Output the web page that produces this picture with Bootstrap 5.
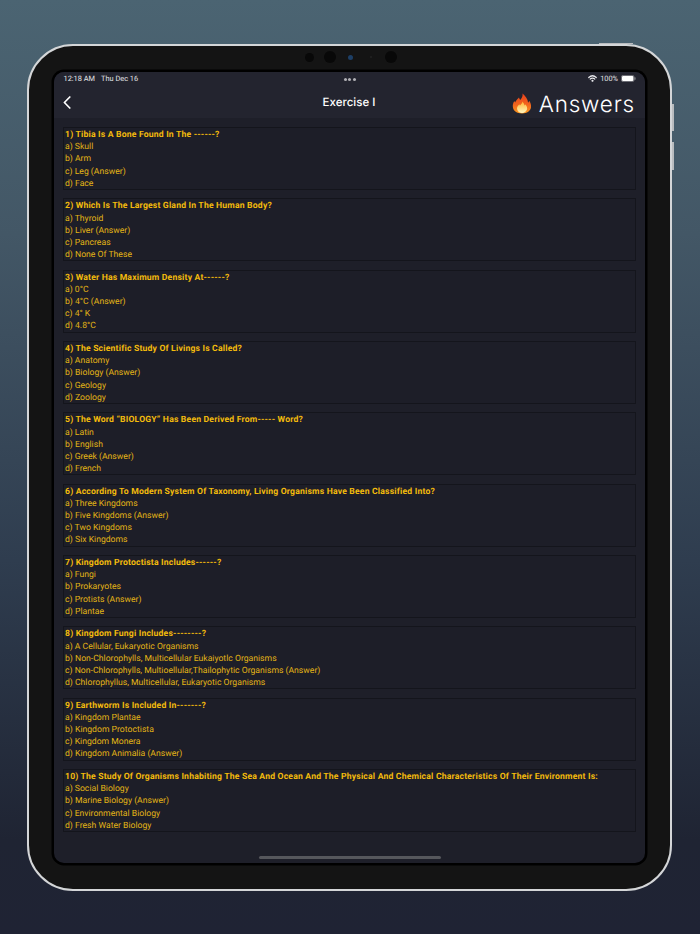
<!DOCTYPE html>
<html lang="en">
<head>
  <meta charset="UTF-8">
  <title>Exercise I</title>
  <meta name="viewport" content="width=device-width, initial-scale=1">
  <link href="https://cdn.jsdelivr.net/npm/bootstrap@5.3.2/dist/css/bootstrap.min.css" rel="stylesheet">
  <style>
    html, body { height: 934px; overflow: hidden; }
    body {
      background: linear-gradient(180deg, #4b6472 0%, #435766 25%, #2f3d4f 60%, #1f2433 90%, #1f2334 100%);
      padding: 44px 28px 0 27px;
      font-family: Roboto, "Liberation Sans", sans-serif;
      text-rendering: geometricPrecision;
    }
    .tablet {
      position: relative;
      width: 645px; height: 847px;
      background: #141414;
      border: 2px solid #d4d6d8;
      border-radius: 46px;
      padding: 26px 25px;
    }
    .tablet-btn { position: absolute; background: #b9bcbf; }
    .btn-top { top: -3px; right: 37px; width: 34px; height: 1px; }
    .btn-vol1 { top: 58px; right: -4px; width: 2px; height: 27px; }
    .btn-vol2 { top: 96px; right: -4px; width: 2px; height: 28px; }
    .sensor-row { position: absolute; top: 5px; left: 270px; }
    .sensor-slot { width: 20.5px; }
    .lens { border-radius: 50%; background: #080808; }
    .lens-a { width: 9px; height: 9px; }
    .lens-b { width: 12px; height: 12px; }
    .lens-c { width: 5px; height: 5px; background: #1d3f66; }
    .lens-d { width: 2px; height: 2px; background: #222; }
    .screen {
      height: 791px;
      background: #1e1f29;
      border-radius: 10px;
      box-shadow: 0 0 0 2.5px #000;
      overflow: hidden;
      color: #fff;
    }
    .top-area { background: #23242f; height: 46px; }
    .status-line {
      height: 14px; padding: 0 9px 0 9.5px;
      font-size: 7.4px; color: #e4e4e8;
    }
    .status-side { flex: 1 1 0; gap: 6px; }
    .status-right { gap: 3px; }
    .status-dots { gap: 1.5px; }
    .status-dots i { width: 3px; height: 3px; border-radius: 50%; background: #b0b0b5; display: block; }
    .nav-line { height: 32px; padding: 0 10px 0 9px; }
    .page-title { font-family: Inter, sans-serif; font-size: 11.5px; font-weight: 500; padding-top: 1px; }
    .nav-side { width: 140px; }
    .flame-icon { margin-right: 7px; margin-top: 3px; }
    .answers-word { font-family: Inter, sans-serif; font-size: 22.5px; font-weight: 300; letter-spacing: .8px; line-height: 1; padding-top: 6px; }
    .qa-list { padding: 9px 9px 0 9px; gap: 8.33px; }
    .qa-box {
      height: 63px;
      border: 1px solid #14151c;
      padding: 1px 1px 0;
      color: #e2b415;
      font-size: 8.65px;
      line-height: 12.2px;
      background: #1d1e28;
    }
    .qa-box b { display: block; font-weight: 700; color: #f3bb0c; letter-spacing: .18px; }
    .home-bar { width: 182px; height: 3px; background: #56575c; border-radius: 2px; margin: 0 auto; }
    .home-wrap { padding-top: 24px; }
  </style>
</head>
<body>
  <div class="tablet">
    <span class="tablet-btn btn-top"></span>
    <span class="tablet-btn btn-vol1"></span>
    <span class="tablet-btn btn-vol2"></span>
    <div class="sensor-row d-flex align-items-center">
      <span class="sensor-slot d-flex justify-content-center"><span class="lens lens-a"></span></span>
      <span class="sensor-slot d-flex justify-content-center"><span class="lens lens-b"></span></span>
      <span class="sensor-slot d-flex justify-content-center"><span class="lens lens-c"></span></span>
      <span class="sensor-slot d-flex justify-content-center"><span class="lens lens-d"></span></span>
      <span class="sensor-slot d-flex justify-content-center"><span class="lens lens-b"></span></span>
    </div>

    <div class="screen">
      <div class="top-area">
        <div class="status-line d-flex justify-content-between align-items-center">
          <div class="status-side d-flex"><span>12:18 AM</span><span>Thu Dec 16</span></div>
          <div class="status-dots d-flex"><i></i><i></i><i></i></div>
          <div class="status-side status-right d-flex align-items-center justify-content-end">
            <svg width="9" height="7" viewBox="0 0 18 14" fill="none" stroke="#e8e8ec" stroke-width="2.4" stroke-linecap="round">
              <path d="M1.500 5C6 .8 12 .8 16.500 5"/>
              <path d="M4.500 8c2.600-2.300 6.400-2.300 9 0"/>
              <circle cx="9" cy="11.500" r="1" fill="#e8e8ec"/>
            </svg>
            <span>100%</span>
            <svg width="15" height="7" viewBox="0 0 15 7">
              <rect x=".4" y=".4" width="12.600" height="6.200" rx="1.600" fill="none" stroke="#9a9a9f" stroke-width=".7"/>
              <rect x="1" y="1" width="11.400" height="5" rx="1" fill="#fff"/>
              <rect x="13.500" y="2.300" width="1" height="2.400" rx=".5" fill="#9a9a9f"/>
            </svg>
          </div>
        </div>
        <div class="nav-line d-flex justify-content-between align-items-center">
          <div class="nav-side">
            <svg width="8" height="13" viewBox="0 0 8 13" fill="none" stroke="#fff" stroke-width="1.7" stroke-linecap="round" stroke-linejoin="round" class="d-block">
              <path d="M6.800 1 1.400 6.500l5.400 5.500"/>
            </svg>
          </div>
          <div class="page-title">Exercise I</div>
          <div class="nav-side d-flex justify-content-end align-items-center">
            <svg class="flame-icon" width="20" height="21" viewBox="0 0 20 21">
              <defs>
                <linearGradient id="flameGrad" x1="0" y1="0" x2="0" y2="1">
                  <stop offset="0" stop-color="#e8401c"/>
                  <stop offset=".55" stop-color="#f2641c"/>
                  <stop offset="1" stop-color="#fb9a20"/>
                </linearGradient>
                <linearGradient id="flameCore" x1="0" y1="0" x2="0" y2="1">
                  <stop offset="0" stop-color="#ffb52e"/>
                  <stop offset="1" stop-color="#fff6c0"/>
                </linearGradient>
              </defs>
              <path fill="url(#flameGrad)" d="M10.500.5c.6 3-1 4.700-2.300 6.500C7.600 6 7.200 5.400 7 4.500 4.800 6.500 3.800 8 3.200 9.500 2.800 9 2.500 8.600 2.300 8 .8 10.500.5 12.500 1 14.800c.7 3.200 3.700 5.700 9 5.700s8.400-2.500 9-5.900c.4-2.500-.4-4.800-1.800-6.800-.2.800-.5 1.400-1.100 2C15.800 6 13.500 3 10.500.5z"/>
              <path fill="url(#flameCore)" d="M10.300 8.500c.1 1.800-1.300 2.700-2.300 4-.3-.4-.5-.8-.6-1.300C5.700 12.700 4.800 14.300 5.100 16c.4 2.400 2.500 4 5 4s4.600-1.500 5-3.900c.3-1.800-.6-3.400-1.700-4.900-.1.600-.3 1-.7 1.400-.4-1.500-1.200-2.900-2.400-4.100z"/>
            </svg>
            <span class="answers-word">Answers</span>
          </div>
        </div>
      </div>

      <div class="qa-list d-flex flex-column">
        <div class="qa-box">
          <b>1) Tibia Is A Bone Found In The ------?</b>
          <div>a) Skull</div><div>b) Arm</div><div>c) Leg (Answer)</div><div>d) Face</div>
        </div>
        <div class="qa-box">
          <b>2) Which Is The Largest Gland In The Human Body?</b>
          <div>a) Thyroid</div><div>b) Liver (Answer)</div><div>c) Pancreas</div><div>d) None Of These</div>
        </div>
        <div class="qa-box">
          <b>3) Water Has Maximum Density At------?</b>
          <div>a) 0°C</div><div>b) 4°C (Answer)</div><div>c) 4° K</div><div>d) 4.8°C</div>
        </div>
        <div class="qa-box">
          <b>4) The Scientific Study Of Livings Is Called?</b>
          <div>a) Anatomy</div><div>b) Biology (Answer)</div><div>c) Geology</div><div>d) Zoology</div>
        </div>
        <div class="qa-box">
          <b>5) The Word “BIOLOGY” Has Been Derived From----- Word?</b>
          <div>a) Latin</div><div>b) English</div><div>c) Greek (Answer)</div><div>d) French</div>
        </div>
        <div class="qa-box">
          <b>6) According To Modern System Of Taxonomy, Living Organisms Have Been Classified Into?</b>
          <div>a) Three Kingdoms</div><div>b) Five Kingdoms (Answer)</div><div>c) Two Kingdoms</div><div>d) Six Kingdoms</div>
        </div>
        <div class="qa-box">
          <b>7) Kingdom Protoctista Includes------?</b>
          <div>a) Fungi</div><div>b) Prokaryotes</div><div>c) Protists (Answer)</div><div>d) Plantae</div>
        </div>
        <div class="qa-box">
          <b>8) Kingdom Fungi Includes--------?</b>
          <div>a) A Cellular, Eukaryotic Organisms</div><div>b) Non-Chlorophylls, Multicellular Eukaiyotlc Organisms</div><div>c) Non-Chlorophylls, Multioellular,Thailophytic Organisms (Answer)</div><div>d) Chlorophyllus, Multicellular, Eukaryotic Organisms</div>
        </div>
        <div class="qa-box">
          <b>9) Earthworm Is Included In-------?</b>
          <div>a) Kingdom Plantae</div><div>b) Kingdom Protoctista</div><div>c) Kingdom Monera</div><div>d) Kingdom Animalia (Answer)</div>
        </div>
        <div class="qa-box">
          <b>10) The Study Of Organisms Inhabiting The Sea And Ocean And The Physical And Chemical Characteristics Of Their Environment Is:</b>
          <div>a) Social Biology</div><div>b) Marine Biology (Answer)</div><div>c) Environmental Biology</div><div>d) Fresh Water Biology</div>
        </div>
      </div>
      <div class="home-wrap"><div class="home-bar"></div></div>
    </div>
  </div>
</body>
</html>
